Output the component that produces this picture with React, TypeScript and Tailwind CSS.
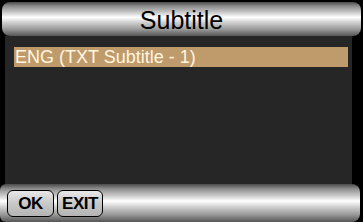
export default function App() {
  const metal =
    "bg-[linear-gradient(to_bottom,#4a4a4a_0%,#8a8a8a_12%,#c8c8c8_30%,#ffffff_45%,#d0d0d0_60%,#9a9a9a_80%,#555555_100%)]";
  const btn =
    "h-[27px] rounded-[6px] border-[1.5px] border-black bg-[linear-gradient(to_bottom,#e8e8e8,#c8c8c8_50%,#b4b4b4)] text-black font-bold text-[17px] leading-none tracking-[-0.5px] pt-[1px]";
  return (
    <div className="w-[363px] h-[222px] bg-black flex flex-col overflow-hidden font-['Liberation_Sans',Arial,sans-serif]">
      <div
        className={`mt-[2px] ml-[2px] mr-[2px] h-[34px] rounded-[8px] ${metal} flex items-center justify-center text-black text-[25px] leading-none pt-[2px]`}
      >
        Subtitle
      </div>
      <div className="flex-1 ml-[5px] mr-[11px] bg-[#262626] pt-[11px] pl-[9px] pr-[4px]">
        <div className="h-[20px] bg-[#bf9a6a] text-[#fff6e0] text-[18px] leading-[20px] pl-[1px]">
          ENG (TXT Subtitle - 1)
        </div>
      </div>
      <div
        className={`h-[38px] mr-[3px] rounded-r-[8px] rounded-l-[6px] ${metal} flex items-center gap-[3px] pl-[7px]`}
      >
        <button className={`w-[47px] ${btn}`}>OK</button>
        <button className={`w-[46px] ${btn}`}>EXIT</button>
      </div>
    </div>
  );
}
